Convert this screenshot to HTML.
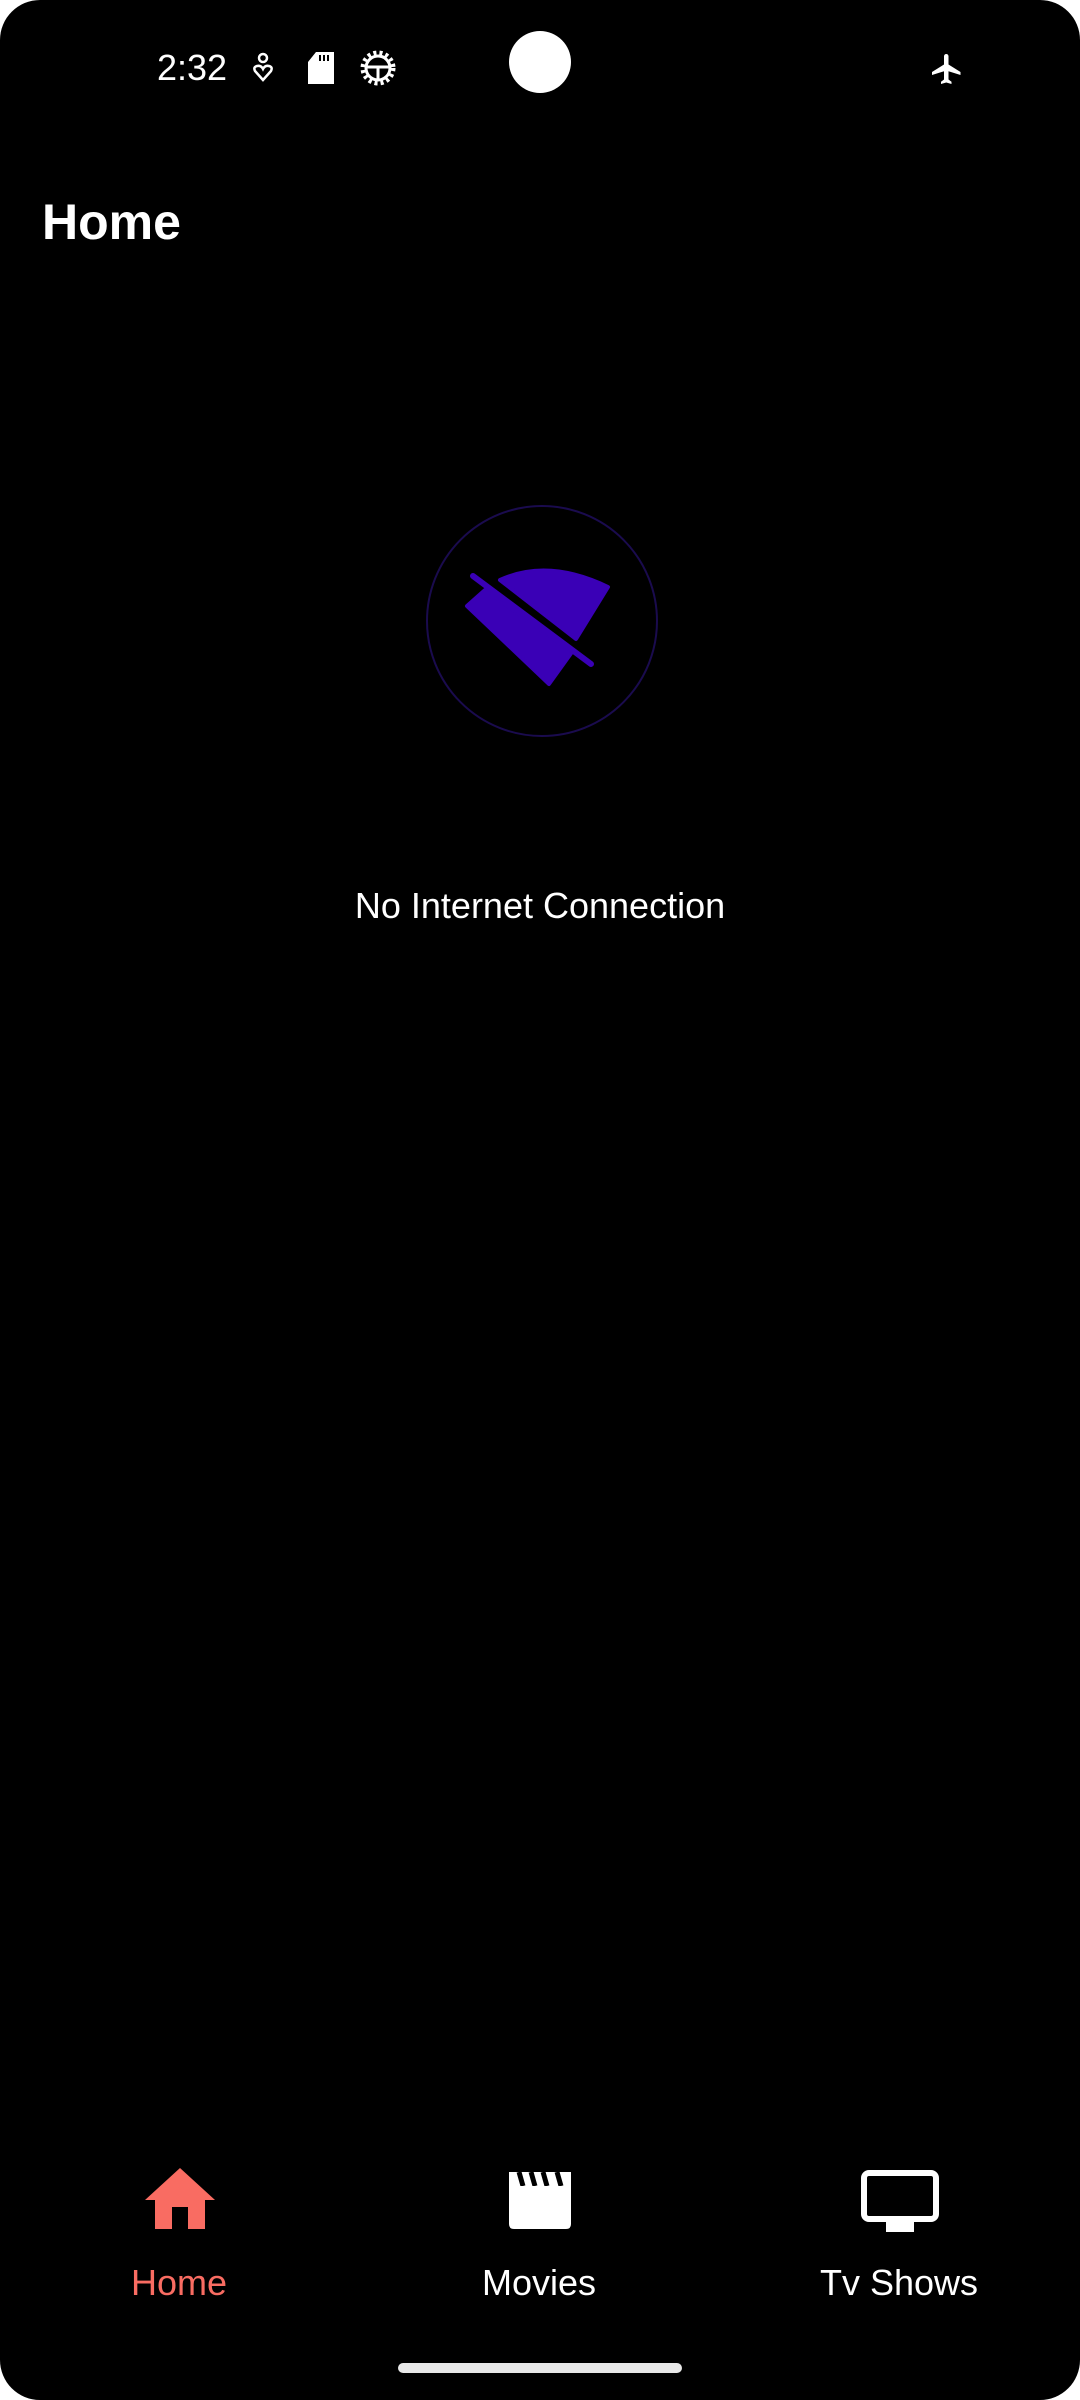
<!DOCTYPE html>
<html><head><meta charset="utf-8"><style>
html,body{margin:0;padding:0;background:#fff;}
body{width:1080px;height:2400px;position:relative;overflow:hidden;font-family:"Liberation Sans",sans-serif;color:#fff;}
.scr{position:absolute;left:0;top:0;width:1080px;height:2400px;background:#000;border-radius:40px;}
.a{position:absolute;}
</style></head><body>
<div class="scr"></div>
<div class="a" style="left:157px;top:46px;font-size:36px;line-height:44px;">2:32</div>
<svg class="a" style="left:250px;top:52px" width="28" height="32" viewBox="0 0 28 32"><circle cx="13" cy="6" r="4" fill="none" stroke="#fff" stroke-width="2.5"/><path d="M13 28 L5 19 Q3 15 7 14 Q11 13 13 17 Q15 13 19 14 Q23 15 21 19 Z" fill="none" stroke="#fff" stroke-width="2.5"/></svg>
<svg class="a" style="left:306px;top:52px" width="30" height="34" viewBox="0 0 30 34"><path d="M10 0 H28 V32 H2 V10 Z" fill="#fff"/><rect x="13" y="3" width="2" height="6" fill="#000"/><rect x="17" y="3" width="2" height="6" fill="#000"/><rect x="21" y="3" width="2" height="6" fill="#000"/></svg>
<svg class="a" style="left:358px;top:48px" width="40" height="40" viewBox="0 0 40 40"><circle cx="20" cy="20" r="15" fill="none" stroke="#fff" stroke-width="5" stroke-dasharray="3 3"/><circle cx="20" cy="20" r="12" fill="none" stroke="#fff" stroke-width="3"/><path d="M9 19 H31 M20 19 V32" stroke="#fff" stroke-width="3"/></svg>
<div class="a" style="left:509px;top:31px;width:62px;height:62px;border-radius:50%;background:#fff"></div>
<svg class="a" style="left:929px;top:50px" width="36" height="38" viewBox="0 0 24 24"><path d="M21 16v-2l-8-5V3.5c0-.83-.67-1.5-1.5-1.5S10 2.67 10 3.5V9l-8 5v2l8-2.5V19l-2 1.5V22l3.5-1 3.5 1v-1.5L13 19v-5.5l8 2.5z" fill="#fff"/></svg>
<div class="a" style="left:42px;top:192px;font-size:50px;line-height:60px;font-weight:bold;">Home</div>
<svg class="a" style="left:0;top:0" width="1080" height="1000">
<circle cx="542" cy="621" r="115" fill="none" stroke="#1a0b4e" stroke-width="2"/>
<path d="M500 580 Q548 558 608 587 L576 639 Z" fill="#3a00b6" stroke="#3a00b6" stroke-width="4" stroke-linejoin="round"/>
<path d="M467 606 L485 590 L572 652 L549 684 Z" fill="#3a00b6" stroke="#3a00b6" stroke-width="4" stroke-linejoin="round"/>
<line x1="473" y1="576" x2="591" y2="664" stroke="#3a00b6" stroke-width="6" stroke-linecap="round"/>
</svg>
<div class="a" style="left:0;width:1080px;top:884px;text-align:center;font-size:36px;line-height:44px;">No Internet Connection</div>
<svg class="a" style="left:145px;top:2168px" width="70" height="62" viewBox="0 0 70 62"><path d="M35 0 L70 32 H60 V61 H43 V39 H27 V61 H10 V32 H0 Z" fill="#f96c62"/></svg>
<svg class="a" style="left:505px;top:2172px" width="70" height="58" viewBox="0 0 70 58"><path d="M4 0 H66 V52 Q66 57 61 57 H9 Q4 57 4 52 Z" fill="#fff"/><path d="M14 0 L18 14 M26 0 L30 14 M38 0 L42 14 M52 0 L56 14" stroke="#000" stroke-width="5"/><rect x="4" y="14" width="62" height="3" fill="#fff"/></svg>
<svg class="a" style="left:861px;top:2170px" width="78" height="64" viewBox="0 0 78 64"><rect x="3" y="3" width="72" height="46" rx="5" fill="none" stroke="#fff" stroke-width="6"/><rect x="25" y="52" width="28" height="10" fill="#fff"/></svg>
<div class="a" style="left:79px;width:200px;top:2261px;text-align:center;font-size:36px;line-height:44px;color:#f96c62;">Home</div>
<div class="a" style="left:439px;width:200px;top:2261px;text-align:center;font-size:36px;line-height:44px;">Movies</div>
<div class="a" style="left:779px;width:240px;top:2261px;text-align:center;font-size:36px;line-height:44px;">Tv Shows</div>
<div class="a" style="left:398px;top:2363px;width:284px;height:10px;border-radius:5px;background:#e8e8e8"></div>
</body></html>
